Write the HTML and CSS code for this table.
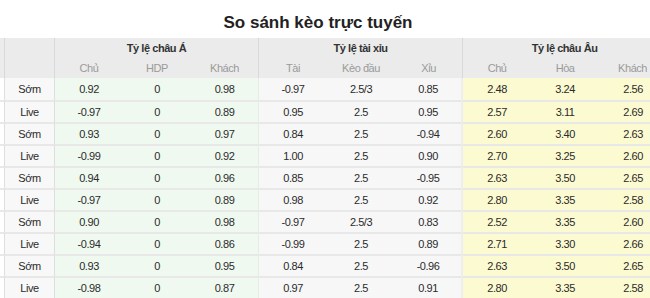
FILE: index.html
```html
<!DOCTYPE html>
<html lang="vi">
<head>
<meta charset="utf-8">
<title>So sánh kèo trực tuyến</title>
<link rel="stylesheet" href="styles.css">
</head>
<body>
<div class="page">
  <h2 class="title">So sánh kèo trực tuyến</h2>
  <table class="odds">
    <colgroup>
      <col class="c-edge"><col class="c-label">
      <col class="c-sub"><col class="c-sub"><col class="c-sub">
      <col class="c-sub"><col class="c-sub"><col class="c-sub">
      <col class="c-sub"><col class="c-sub"><col class="c-sub">
    </colgroup>
    <thead>
      <tr class="group-row">
        <th class="edge" rowspan="2"></th>
        <th class="label-h" rowspan="2"></th>
        <th class="grp" colspan="3">Tỷ lệ châu Á</th>
        <th class="grp" colspan="3">Tỷ lệ tài xỉu</th>
        <th class="grp" colspan="3">Tỷ lệ châu Âu</th>
      </tr>
      <tr class="sub-row">
        <th>Chủ</th><th>HDP</th><th class="end">Khách</th>
        <th>Tài</th><th>Kèo đầu</th><th class="end">Xỉu</th>
        <th>Chủ</th><th>Hòa</th><th class="end">Khách</th>
      </tr>
    </thead>
    <tbody>
      <tr><td class="edge"></td><td class="label">Sớm</td><td class="asia">0.92</td><td class="asia">0</td><td class="asia end">0.98</td><td class="ou">-0.97</td><td class="ou">2.5/3</td><td class="ou end">0.85</td><td class="eu">2.48</td><td class="eu">3.24</td><td class="eu">2.56</td></tr>
      <tr><td class="edge"></td><td class="label">Live</td><td class="asia">-0.97</td><td class="asia">0</td><td class="asia end">0.89</td><td class="ou">0.95</td><td class="ou">2.5</td><td class="ou end">0.95</td><td class="eu">2.57</td><td class="eu">3.11</td><td class="eu">2.69</td></tr>
      <tr><td class="edge"></td><td class="label">Sớm</td><td class="asia">0.93</td><td class="asia">0</td><td class="asia end">0.97</td><td class="ou">0.84</td><td class="ou">2.5</td><td class="ou end">-0.94</td><td class="eu">2.60</td><td class="eu">3.40</td><td class="eu">2.63</td></tr>
      <tr><td class="edge"></td><td class="label">Live</td><td class="asia">-0.99</td><td class="asia">0</td><td class="asia end">0.92</td><td class="ou">1.00</td><td class="ou">2.5</td><td class="ou end">0.90</td><td class="eu">2.70</td><td class="eu">3.25</td><td class="eu">2.60</td></tr>
      <tr><td class="edge"></td><td class="label">Sớm</td><td class="asia">0.94</td><td class="asia">0</td><td class="asia end">0.96</td><td class="ou">0.85</td><td class="ou">2.5</td><td class="ou end">-0.95</td><td class="eu">2.63</td><td class="eu">3.50</td><td class="eu">2.65</td></tr>
      <tr><td class="edge"></td><td class="label">Live</td><td class="asia">-0.97</td><td class="asia">0</td><td class="asia end">0.89</td><td class="ou">0.98</td><td class="ou">2.5</td><td class="ou end">0.92</td><td class="eu">2.80</td><td class="eu">3.35</td><td class="eu">2.58</td></tr>
      <tr><td class="edge"></td><td class="label">Sớm</td><td class="asia">0.90</td><td class="asia">0</td><td class="asia end">0.98</td><td class="ou">-0.97</td><td class="ou">2.5/3</td><td class="ou end">0.83</td><td class="eu">2.52</td><td class="eu">3.35</td><td class="eu">2.60</td></tr>
      <tr><td class="edge"></td><td class="label">Live</td><td class="asia">-0.94</td><td class="asia">0</td><td class="asia end">0.86</td><td class="ou">-0.99</td><td class="ou">2.5</td><td class="ou end">0.89</td><td class="eu">2.71</td><td class="eu">3.30</td><td class="eu">2.66</td></tr>
      <tr><td class="edge"></td><td class="label">Sớm</td><td class="asia">0.93</td><td class="asia">0</td><td class="asia end">0.95</td><td class="ou">0.84</td><td class="ou">2.5</td><td class="ou end">-0.96</td><td class="eu">2.63</td><td class="eu">3.50</td><td class="eu">2.65</td></tr>
      <tr><td class="edge"></td><td class="label">Live</td><td class="asia">-0.98</td><td class="asia">0</td><td class="asia end">0.87</td><td class="ou">0.97</td><td class="ou">2.5</td><td class="ou end">0.91</td><td class="eu">2.80</td><td class="eu">3.35</td><td class="eu">2.58</td></tr>
    </tbody>
  </table>
</div>
</body>
</html>
```

FILE: styles.css
```css
html, body {
  margin: 0;
  padding: 0;
  overflow: hidden;
  background: #ffffff;
}

.page {
  width: 650px;
  height: 298px;
  overflow: hidden;
  font-family: "Liberation Sans", Arial, sans-serif;
  color: #333333;
}

.title {
  box-sizing: border-box;
  height: 38px;
  margin: 0;
  padding: 9px 14px 0 0;
  line-height: 28px;
  font-family: "Liberation Sans", Arial, sans-serif;
  font-size: 17px;
  font-weight: bold;
  color: #222222;
  text-align: center;
}

.odds {
  border-collapse: separate;
  border-spacing: 0;
  table-layout: fixed;
  width: 667px;
  font-size: 11px;
  letter-spacing: -0.45px;
}

.c-edge { width: 5px; }
.c-label { width: 50px; }
.c-sub { width: 68px; }

.odds th,
.odds td {
  box-sizing: border-box;
  padding: 0;
  text-align: center;
  white-space: nowrap;
  overflow: hidden;
}

.odds thead th {
  background: #ebebeb;
  height: 20px;
  line-height: 20px;
}

.group-row .grp {
  font-weight: bold;
  color: #333333;
  border-right: 1px solid #d9d9d9;
}

.sub-row th {
  font-weight: normal;
  color: #9a9a9a;
}

.sub-row th.end {
  border-right: 1px solid #d9d9d9;
}

.odds thead .edge,
.odds thead .label-h {
  border-right: 1px solid #d9d9d9;
}

.odds tbody td {
  height: 22px;
  line-height: 20px;
  border-top: 2px solid #e8e8e8;
  color: #2b2b2b;
}

.odds tbody tr:first-child td {
  border-top: 0;
  height: 22px;
  line-height: 22px;
}

.odds tbody .edge {
  background: #ffffff;
  border-right: 1px solid #dedede;
}

.odds tbody .label {
  background: #f8f8f8;
  border-right: 1px solid #dedede;
}

.odds tbody .asia {
  background: #eff9ef;
}

.odds tbody .asia.end {
  border-right: 1px solid #e2eee2;
}

.odds tbody .ou {
  background: #f7f7f7;
}

.odds tbody .ou.end {
  border-right: 2px solid #eeeeee;
}

.odds tbody .eu {
  background: #fcfad1;
}
```
